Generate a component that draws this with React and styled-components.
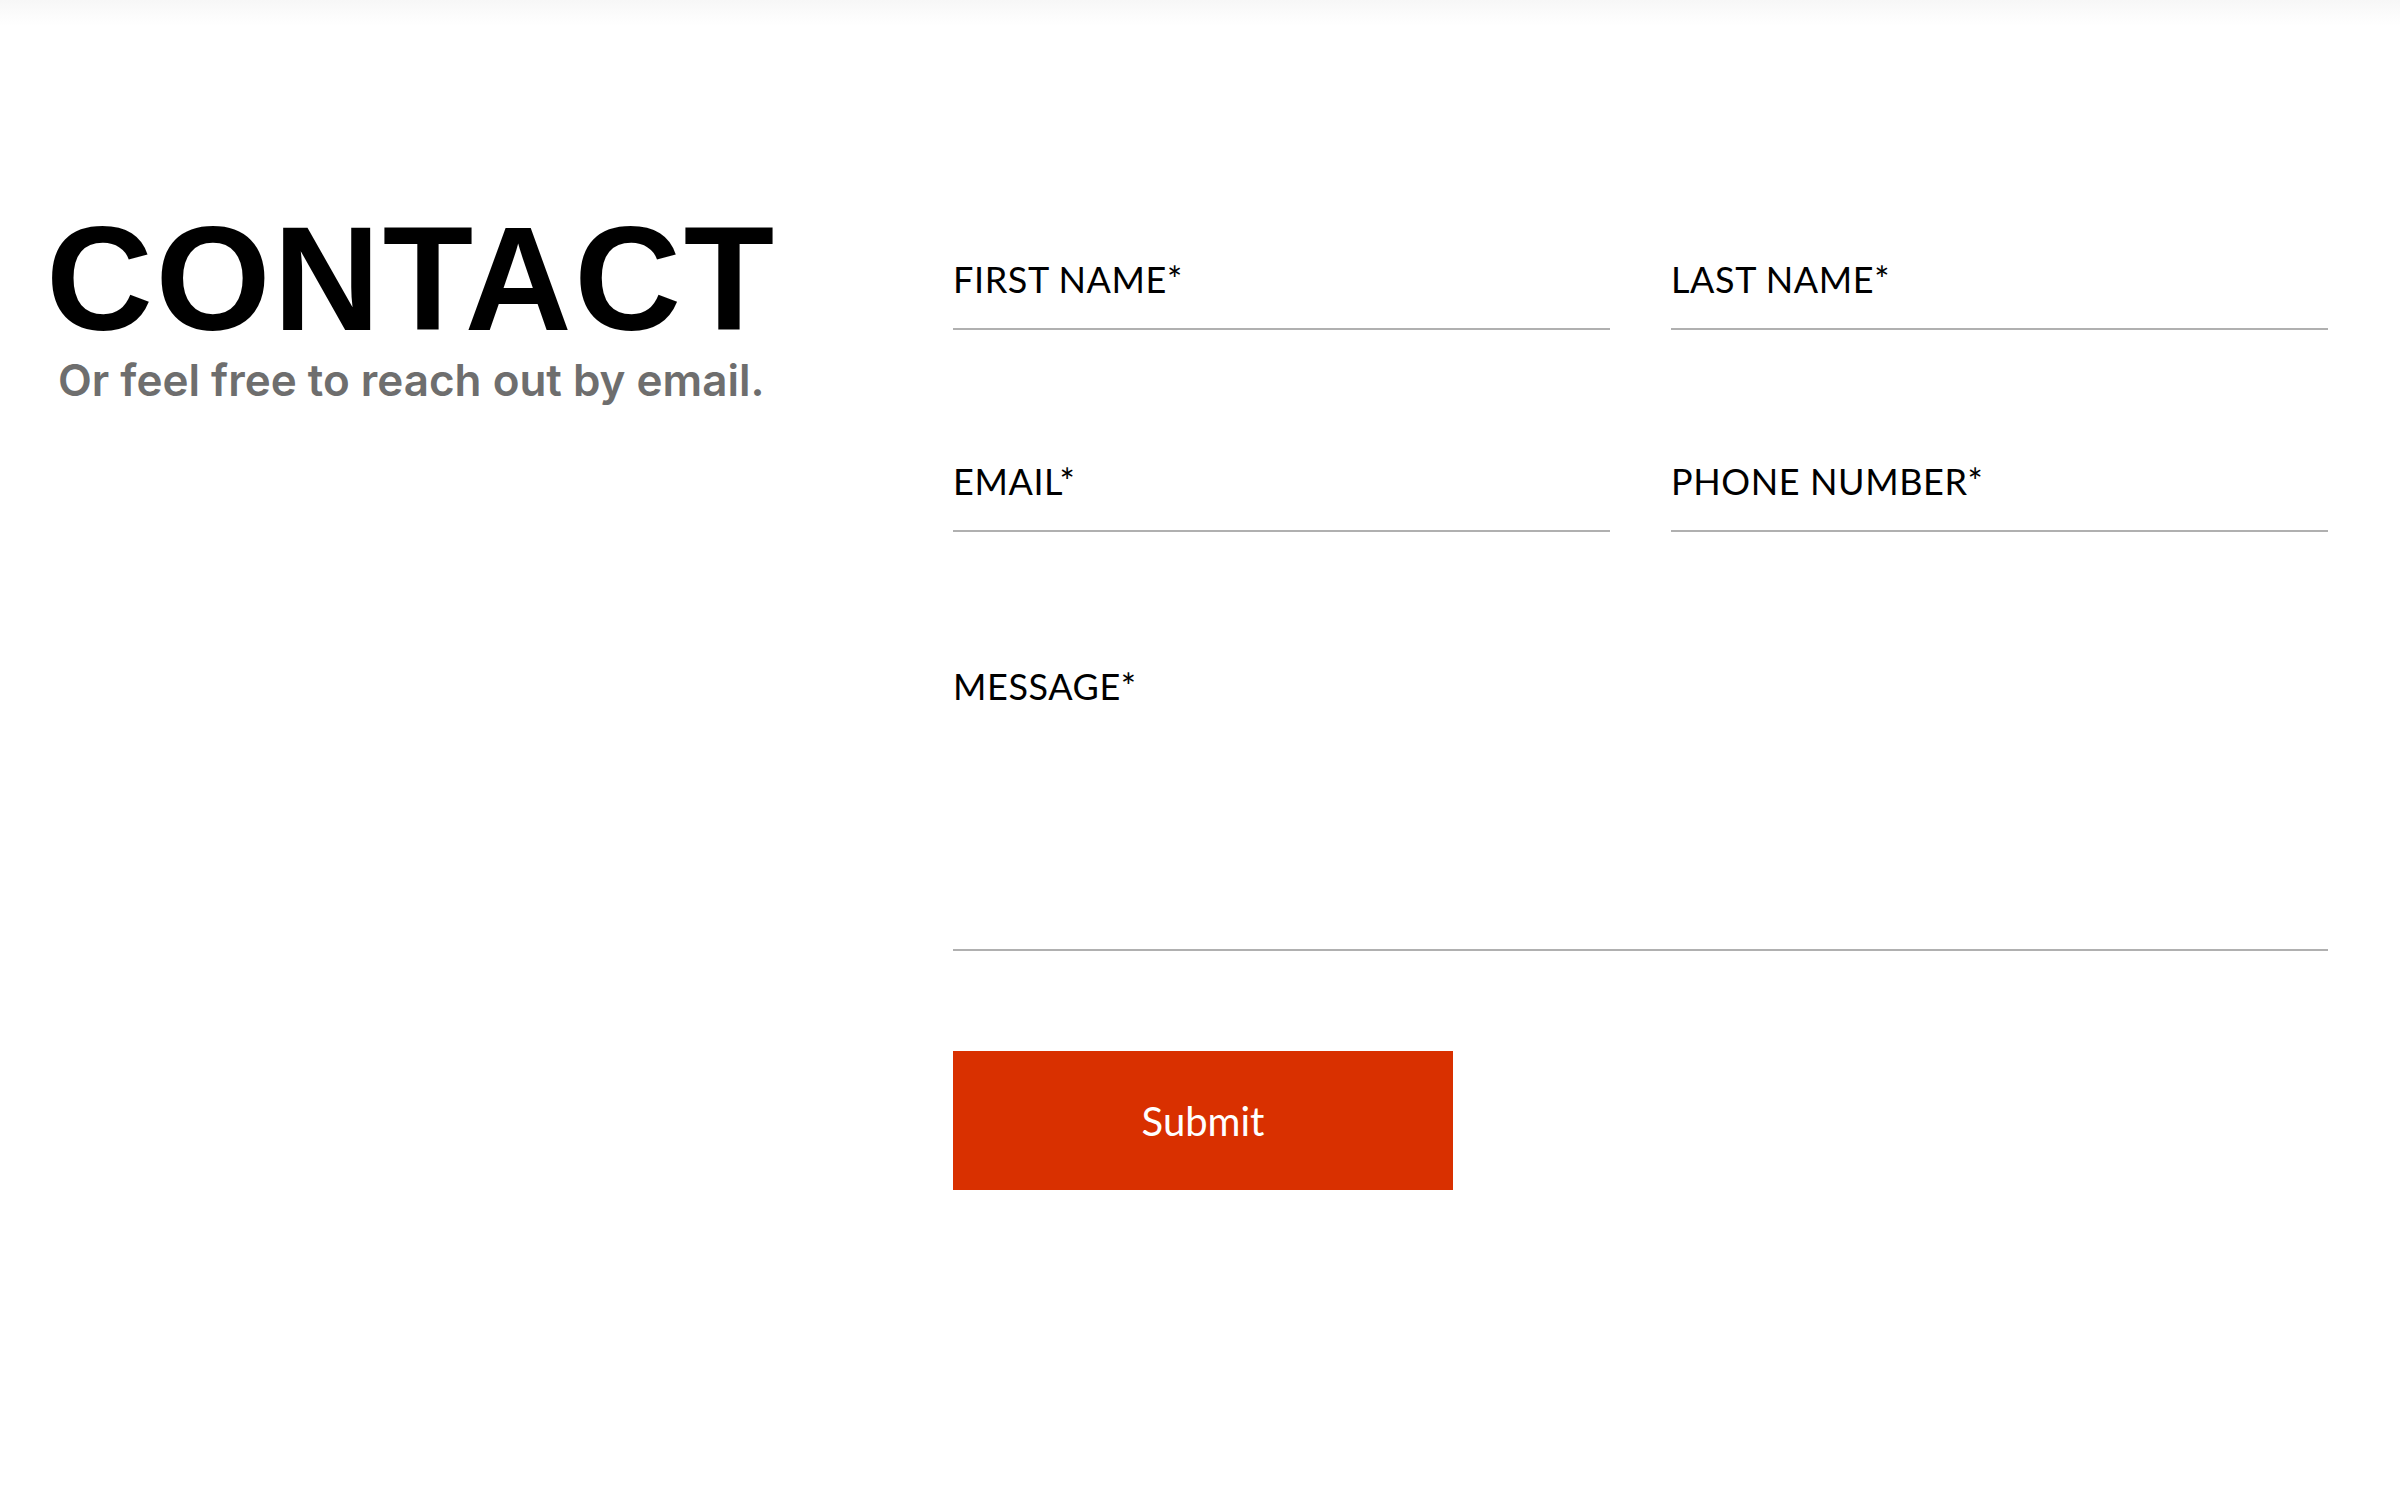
import React, { useState } from "react";
import styled, { createGlobalStyle } from "styled-components";

const GlobalStyle = createGlobalStyle`
  html, body {
    margin: 0;
    padding: 0;
    background: #ffffff;
  }
  * {
    box-sizing: border-box;
  }
`;

const Page = styled.div`
  min-height: 1496px;
  background: linear-gradient(#f7f7f7, #ffffff 26px) no-repeat;
  padding: 205px 72px 0 46px;
  display: grid;
  grid-template-columns: 907px 1fr;
  align-items: start;
`;

const Intro = styled.div`
  display: flex;
  flex-direction: column;
`;

const Heading = styled.h1`
  margin: 0;
  font-family: "Liberation Sans", Arial, sans-serif;
  font-weight: 700;
  font-size: 148px;
  line-height: 1;
  letter-spacing: 2.6px;
  color: #000;
`;

const Subtitle = styled.p`
  margin: 3px 0 0 12px;
  font-family: Inter, "Liberation Sans", sans-serif;
  font-weight: 600;
  font-size: 44px;
  line-height: 48px;
  color: #6e6e6e;
`;

const Form = styled.form`
  margin-top: 53px;
  display: grid;
  grid-template-columns: 1fr 1fr;
  column-gap: 61px;
  row-gap: 130px;
`;

const Field = styled.label`
  display: flex;
  flex-direction: column;
  grid-column: ${(p) => (p.$wide ? "1 / -1" : "auto")};
  margin-top: ${(p) => (p.$wide ? "3px" : "0")};
`;

const LabelText = styled.span`
  font-family: Lato, "Liberation Sans", sans-serif;
  font-weight: 400;
  font-size: 36px;
  line-height: 42px;
  letter-spacing: 0.6px;
  color: #000;
`;

const Input = styled.input`
  height: 30px;
  border: 0;
  border-bottom: 2px solid #b0b0b0;
  border-radius: 0;
  padding: 0;
  background: transparent;
  outline: none;
  font-family: Lato, "Liberation Sans", sans-serif;
  font-size: 28px;
`;

const TextArea = styled.textarea`
  height: 244px;
  border: 0;
  border-bottom: 2px solid #b0b0b0;
  border-radius: 0;
  padding: 0;
  background: transparent;
  outline: none;
  resize: none;
  font-family: Lato, "Liberation Sans", sans-serif;
  font-size: 28px;
`;

const Actions = styled.div`
  grid-column: 1 / -1;
  margin-top: -30px;
`;

const SubmitButton = styled.button`
  width: 500px;
  height: 139px;
  border: 0;
  border-radius: 0;
  background: #d93000;
  color: #fff;
  font-family: Lato, "Liberation Sans", sans-serif;
  font-weight: 400;
  font-size: 40px;
  cursor: pointer;
`;

const fields = [
  { name: "firstName", label: "FIRST NAME*" },
  { name: "lastName", label: "LAST NAME*" },
  { name: "email", label: "EMAIL*" },
  { name: "phone", label: "PHONE NUMBER*" },
];

const App = () => {
  const [values, setValues] = useState({});

  const handleChange = (e) =>
    setValues({ ...values, [e.target.name]: e.target.value });

  const handleSubmit = (e) => {
    e.preventDefault();
  };

  return (
    <>
      <GlobalStyle />
      <Page>
        <Intro>
          <Heading>CONTACT</Heading>
          <Subtitle>Or feel free to reach out by email.</Subtitle>
        </Intro>

        <Form onSubmit={handleSubmit}>
          {fields.map((f) => (
            <Field key={f.name}>
              <LabelText>{f.label}</LabelText>
              <Input
                name={f.name}
                value={values[f.name] || ""}
                onChange={handleChange}
              />
            </Field>
          ))}

          <Field $wide>
            <LabelText>MESSAGE*</LabelText>
            <TextArea
              name="message"
              value={values.message || ""}
              onChange={handleChange}
            />
          </Field>

          <Actions>
            <SubmitButton type="submit">Submit</SubmitButton>
          </Actions>
        </Form>
      </Page>
    </>
  );
};

export default App;
